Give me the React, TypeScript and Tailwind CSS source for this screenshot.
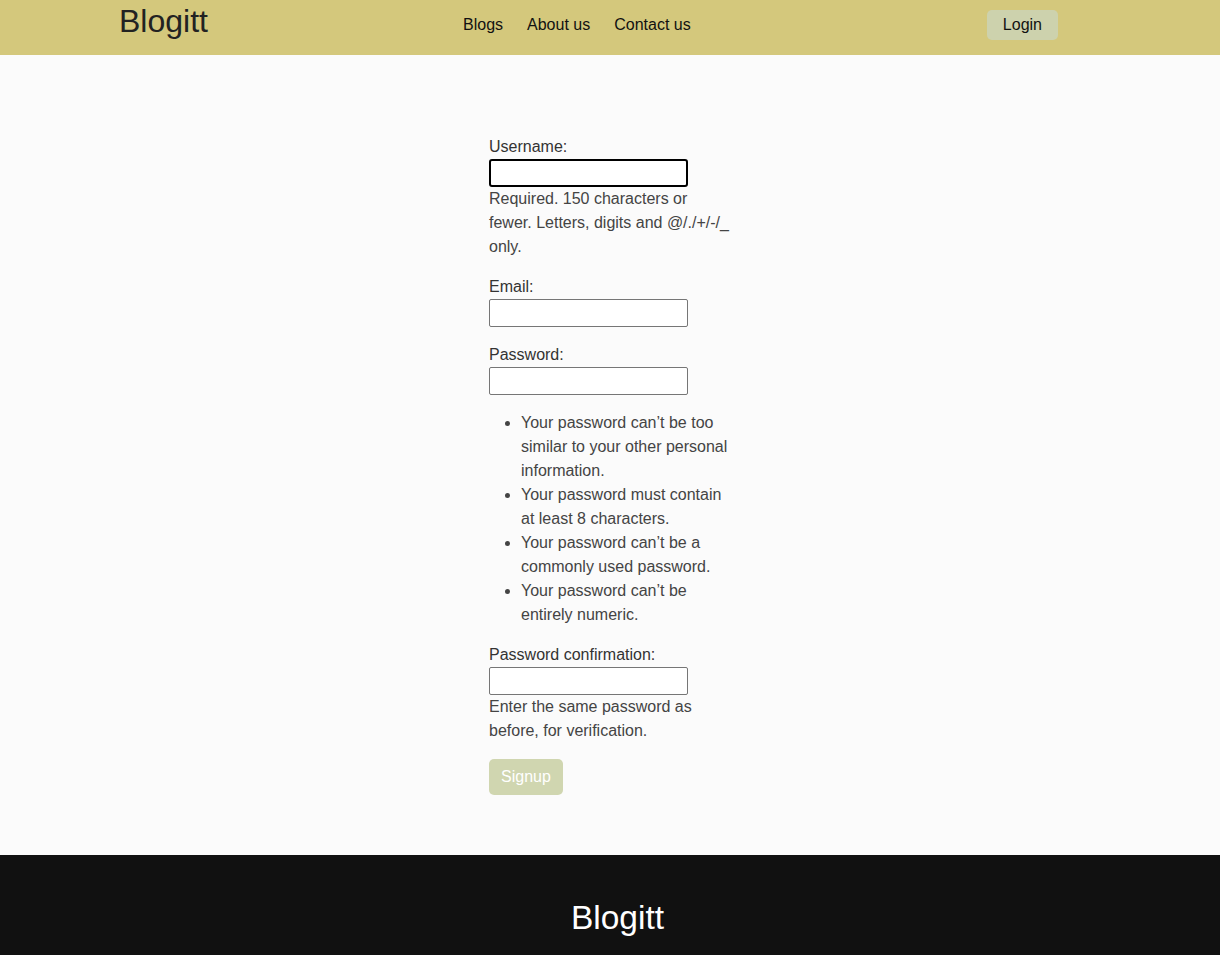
export default function App() {
  const font = { fontFamily: '"Liberation Sans", Arial, sans-serif' };
  return (
    <div style={font} className="min-h-screen bg-[#fbfbfb] text-[#333] text-[16px]">
      <header className="h-[55px] bg-[#d4c87c] flex items-center pl-[119px]">
        <div className="w-[344px] text-[32px] leading-none text-[#222] -mt-[13px]">Blogitt</div>
        <nav className="flex gap-[24px] text-[16px] text-[#111] -mt-[6px]">
          <a>Blogs</a>
          <a>About us</a>
          <a>Contact us</a>
        </nav>
        <div className="flex-1" />
        <button className="mr-[162px] -mt-[5px] h-[30px] px-[16px] rounded-[5px] bg-[#cdd2ad] text-[#111] text-[16px]">
          Login
        </button>
      </header>

      <main className="flex justify-center pt-[80px] pb-[60px]">
        <form className="w-[242px]">
          <div className="leading-[24px]">Username:</div>
          <input className="block w-[199px] h-[28px] border-2 border-black rounded-[3px] bg-white outline-none" />
          <div className="leading-[24px] text-[#444]">
            Required. 150 characters or fewer. Letters, digits and @/./+/-/_ only.
          </div>

          <div className="mt-[16px] leading-[24px]">Email:</div>
          <input className="block w-[199px] h-[28px] border border-[#767676] rounded-[2px] bg-white" />

          <div className="mt-[16px] leading-[24px]">Password:</div>
          <input className="block w-[199px] h-[28px] border border-[#767676] rounded-[2px] bg-white" />
          <ul className="list-disc pl-[32px] mt-[16px] leading-[24px] text-[#444]">
            <li>Your password can’t be too similar to your other personal information.</li>
            <li>Your password must contain at least 8 characters.</li>
            <li>Your password can’t be a commonly used password.</li>
            <li>Your password can’t be entirely numeric.</li>
          </ul>

          <div className="mt-[16px] leading-[24px]">Password confirmation:</div>
          <input className="block w-[199px] h-[28px] border border-[#767676] rounded-[2px] bg-white" />
          <div className="leading-[24px] text-[#444]">
            Enter the same password as before, for verification.
          </div>

          <button
            type="button"
            className="mt-[16px] h-[36px] px-[12px] rounded-[5px] bg-[#d0d6b0] text-white text-[16px]"
          >
            Signup
          </button>
        </form>
      </main>

      <footer className="bg-[#111111] h-[130px] flex justify-center pt-[46px] pl-[15px]">
        <div className="text-[33.5px] leading-none text-white">Blogitt</div>
      </footer>
    </div>
  );
}
